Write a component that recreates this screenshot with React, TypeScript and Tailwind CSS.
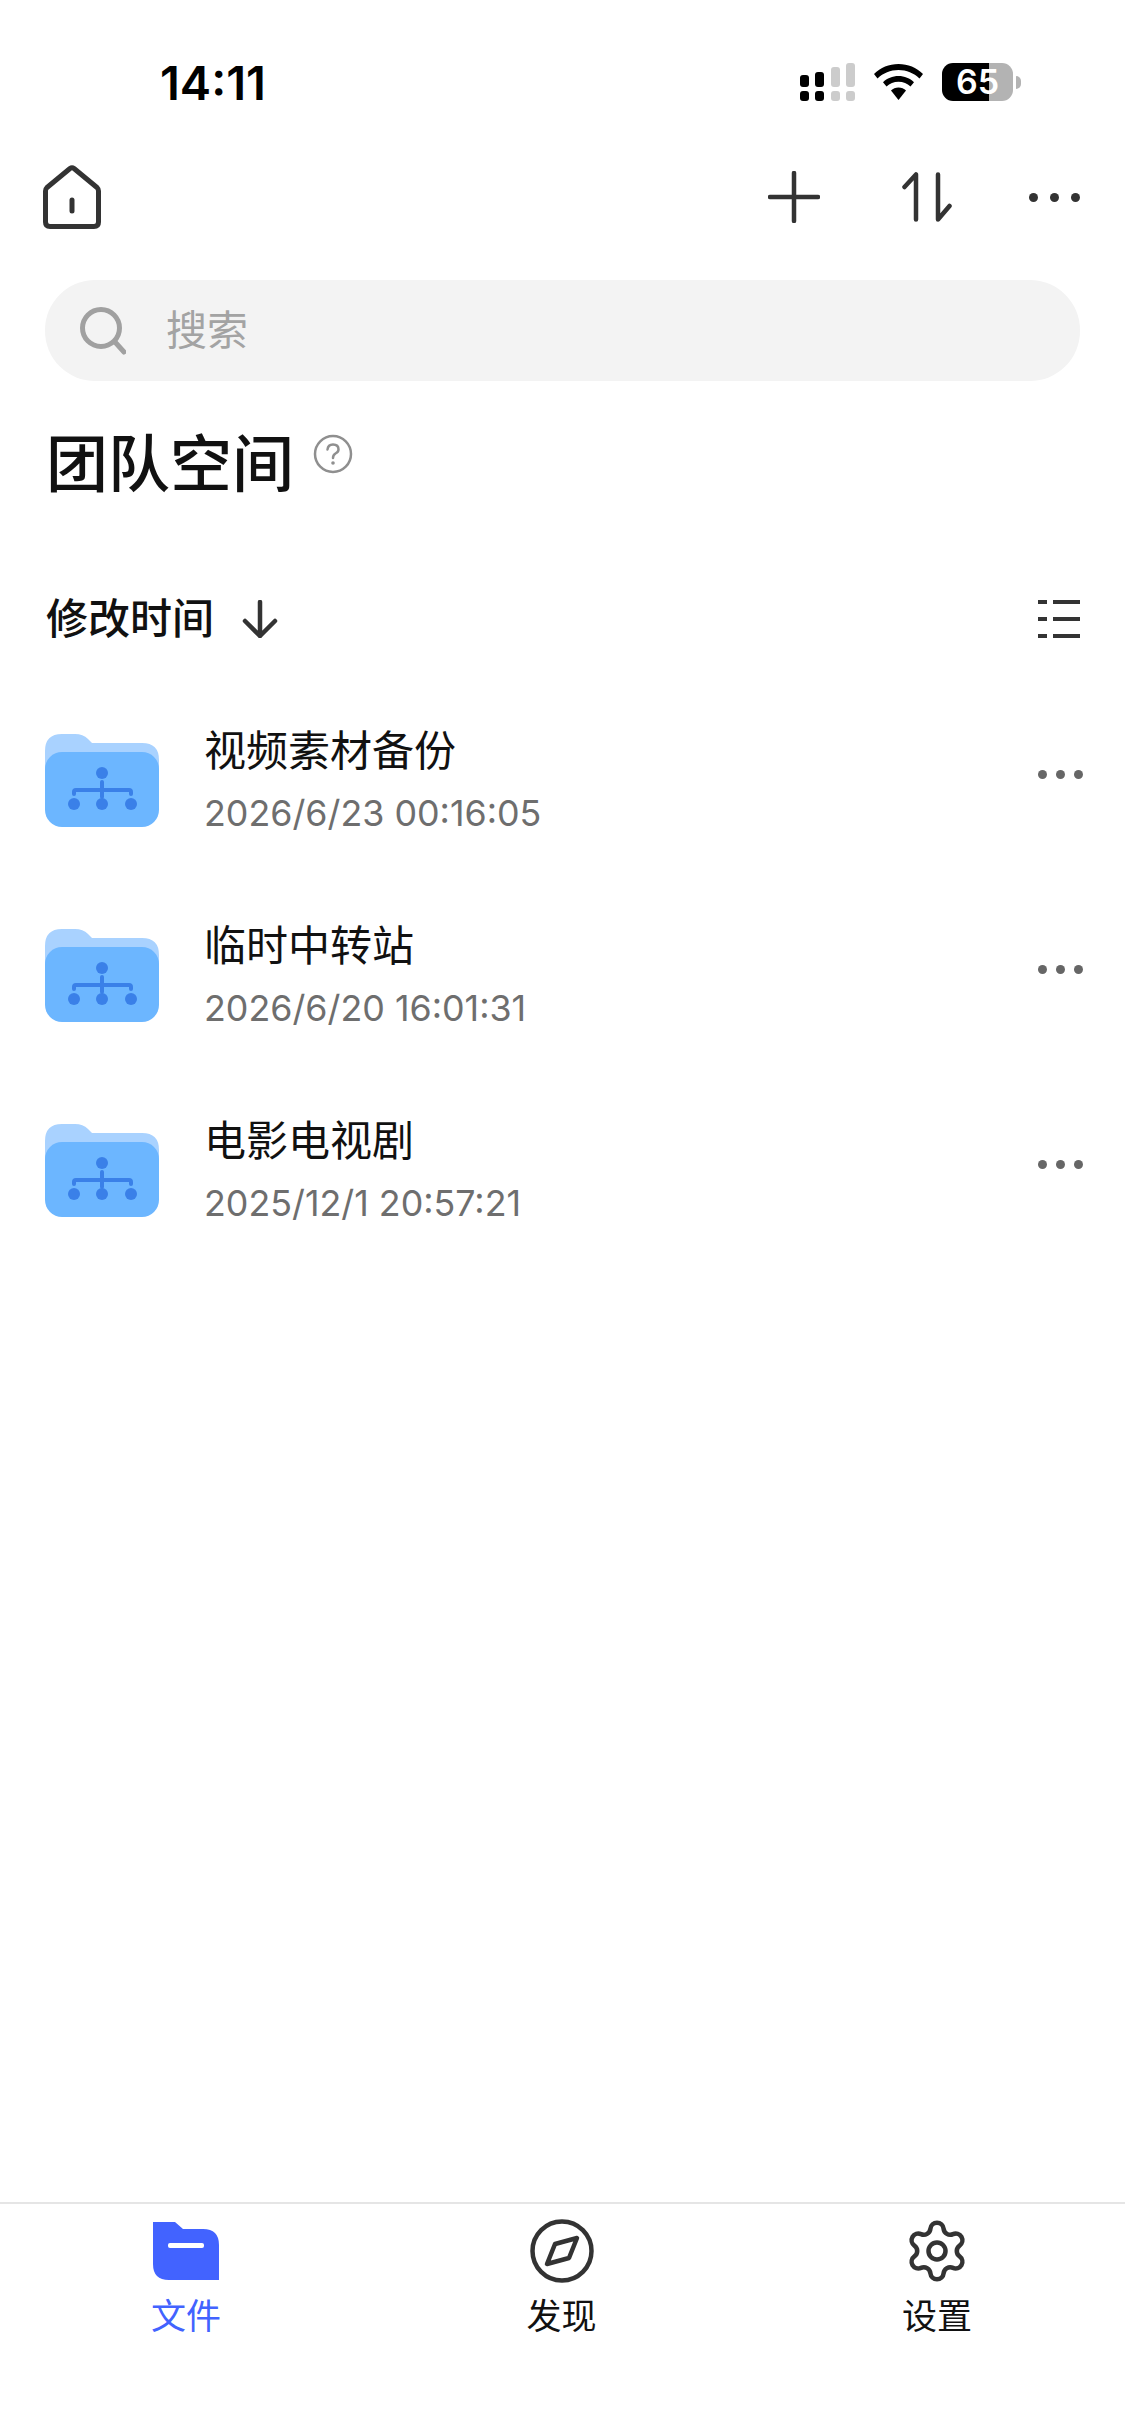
import { Settings } from "lucide-react";

const cjk = "font-['Inter','Noto_Sans_CJK_SC',sans-serif]";

const folders = [
  { name: "视频素材备份", date: "2026/6/23 00:16:05" },
  { name: "临时中转站", date: "2026/6/20 16:01:31" },
  { name: "电影电视剧", date: "2025/12/1 20:57:21" },
];

function TeamFolder() {
  return (
    <svg width="114" height="93" viewBox="0 0 114 93" className="mt-[8px] shrink-0">
      <path d="M0 40V17Q0 0 17 0H30Q38 0 43 5L47 9H97Q114 9 114 26V40Z" fill="#A9D2FF" />
      <rect y="18" width="114" height="75" rx="17" fill="#6CB6FF" />
      <g fill="#3A80E8">
        <circle cx="57" cy="39" r="6" />
        <circle cx="29" cy="70" r="6" />
        <circle cx="57" cy="70" r="6" />
        <circle cx="86" cy="70" r="6" />
      </g>
      <path d="M29 60V58Q29 56 31 56H84Q86 56 86 58V60M57 48V63" fill="none" stroke="#3A80E8" strokeWidth="4" strokeLinecap="round" />
    </svg>
  );
}

function StatusBar() {
  return (
    <div className="flex h-[136px] items-end justify-between pb-[30px] pl-[160px] pr-[104px]">
      <span className="text-[47px] leading-[46px] font-semibold text-black font-['Inter',sans-serif]">14:11</span>
      <div className="mb-[5px] flex items-center gap-[19px]">
        <svg width="55" height="38" viewBox="0 0 55 38">
          <g fill="#000">
            <rect y="12" width="9" height="12" rx="3" />
            <rect y="28" width="9" height="10" rx="3" />
            <rect x="15" y="9" width="9" height="15" rx="3" />
            <rect x="15" y="28" width="9" height="10" rx="3" />
          </g>
          <g fill="#ccc">
            <rect x="31" y="4" width="9" height="20" rx="3" />
            <rect x="31" y="28" width="9" height="10" rx="3" />
            <rect x="46" y="0" width="9" height="24" rx="3" />
            <rect x="46" y="28" width="9" height="10" rx="3" />
          </g>
        </svg>
        <svg width="49" height="36" viewBox="0 0 49 36" fill="#000">
          <path d="M24.500 0C34 0 42.500 3.500 49 10L45.500 14.500C39.800 9 32.500 6 24.500 6C16.500 6 9.200 9 3.500 14.500L0 10C6.500 3.500 15 0 24.500 0Z" />
          <path d="M24.500 12C30.500 12 36 14.300 40 18.200L36.500 22.500C33.300 19.500 29.100 17.800 24.500 17.800C19.900 17.800 15.700 19.500 12.500 22.500L9 18.200C13 14.300 18.500 12 24.500 12Z" />
          <path d="M24.500 23.500C27.500 23.500 30 24.600 32 26.400L24.500 36L17 26.400C19 24.600 21.500 23.500 24.500 23.500Z" />
        </svg>
        <div className="flex items-center gap-[3px]">
          <div className="relative flex h-[38px] w-[71px]">
            <div className="w-[47px] rounded-l-[11px] bg-black" />
            <div className="flex-1 rounded-r-[11px] bg-[#b3b3b3]" />
            <span className="absolute inset-0 flex items-center justify-center text-[34px] leading-none font-semibold text-white font-['Inter',sans-serif]">65</span>
          </div>
          <div className="h-[13px] w-[5px] rounded-r-full bg-[#b3b3b3]" />
        </div>
      </div>
    </div>
  );
}

function Toolbar() {
  return (
    <div className="mt-[27px] flex h-[68px] items-center justify-between pl-[43px] pr-[45px]">
      <svg width="58" height="64" viewBox="0 0 58 64" fill="none" stroke="#333" strokeWidth="5" strokeLinejoin="round" strokeLinecap="round">
        <path d="M2.500 26Q2.500 24 4 22.500L27 3.500Q29 2 31 3.500L54 22.500Q55.500 24 55.500 26V57Q55.500 61.500 51 61.500H7Q2.500 61.500 2.500 57Z" />
        <path d="M29 35V46" />
      </svg>
      <div className="flex items-center">
        <svg width="52" height="52" viewBox="0 0 52 52" stroke="#333" strokeWidth="4.500" strokeLinecap="round">
          <path d="M2 26H50M26 2V50" />
        </svg>
        <svg width="50" height="50" viewBox="0 0 50 50" fill="none" stroke="#333" strokeWidth="4.500" strokeLinecap="round" strokeLinejoin="round" className="ml-[82px]">
          <path d="M2.500 15L14 2.500V47.500M36 2.500V47.500L47.500 34" />
        </svg>
        <svg width="51" height="9" viewBox="0 0 51 9" fill="#333" className="ml-[77px]">
          <circle cx="4.500" cy="4.500" r="4.500" />
          <circle cx="25.500" cy="4.500" r="4.500" />
          <circle cx="46.500" cy="4.500" r="4.500" />
        </svg>
      </div>
    </div>
  );
}

export default function App() {
  return (
    <div className={`flex h-[2436px] w-[1125px] flex-col overflow-hidden bg-white ${cjk}`}>
      <StatusBar />
      <Toolbar />
      <div className="mx-[45px] mt-[49px] flex h-[101px] items-center rounded-[50px] bg-[#f3f3f3] pl-[35px]">
        <svg width="46" height="48" viewBox="0 0 46 48" fill="none" stroke="#a0a0a0" strokeWidth="5" strokeLinecap="round">
          <circle cx="21" cy="21" r="18.500" />
          <path d="M35 35L44 45" />
        </svg>
        <span className="ml-[40px] text-[41px] leading-none text-[#a3a3a3]">搜索</span>
      </div>
      <div className="mt-[45px] flex items-start pl-[46px]">
        <h1 className="text-[62px] leading-[78px] font-medium text-[#111]">团队空间</h1>
        <svg width="40" height="40" viewBox="0 0 40 40" fill="none" className="ml-[19px] mt-[8px]">
          <circle cx="20" cy="20" r="18" stroke="#8f8f8f" strokeWidth="2.500" />
          <path d="M14.500 15.500Q15 10.500 20 10.500Q25.500 10.500 25.500 15.500Q25.500 18 22.500 19.500Q20 21 20 24" stroke="#8f8f8f" strokeWidth="2.500" strokeLinecap="round" />
          <circle cx="20" cy="29" r="1.800" fill="#8f8f8f" />
        </svg>
      </div>
      <div className="mt-[85px] flex h-[60px] items-center justify-between pl-[46px] pr-[45px]">
        <div className="flex items-center gap-[28px]">
          <span className="text-[42px] leading-none font-medium text-[#111]">修改时间</span>
          <svg width="36" height="38" viewBox="0 0 36 38" fill="none" stroke="#333" strokeWidth="4.500" strokeLinecap="round" strokeLinejoin="round">
            <path d="M18 2V36M3 21L18 36L33 21" />
          </svg>
        </div>
        <svg width="42" height="40" viewBox="0 0 42 40" stroke="#333" strokeWidth="4">
          <path d="M0 3H9M15 3H42M0 20H9M15 20H42M0 37H9M15 37H42" />
        </svg>
      </div>
      <div className="mt-[77px] flex flex-col">
        {folders.map((f) => (
          <div key={f.name} className="flex h-[195px] items-start pl-[45px] pr-[42px]">
            <TeamFolder />
            <div className="ml-[45px] flex-1">
              <div className="text-[42px] leading-[50px] text-[#111]">{f.name}</div>
              <div className="mt-[12px] text-[35.800px] leading-[50px] text-[#6e6e6e]">{f.date}</div>
            </div>
            <svg width="45" height="9" viewBox="0 0 45 9" fill="#666" className="mt-[44px]">
              <circle cx="4.500" cy="4.500" r="4.500" />
              <circle cx="22.500" cy="4.500" r="4.500" />
              <circle cx="40.500" cy="4.500" r="4.500" />
            </svg>
          </div>
        ))}
      </div>
      <div className="mt-auto flex h-[234px] justify-between border-t-2 border-[#e5e5e5] pl-[126px] pr-[128px] pt-[15px]">
        <div className="flex w-[120px] flex-col items-center">
          <svg width="66" height="58" viewBox="0 0 66 58" className="mt-[3px]">
            <path d="M0 0H22L30 7H50Q66 7 66 23V58H16Q0 58 0 42Z" fill="#4263FF" />
            <rect x="15" y="21" width="36" height="5" rx="2" fill="#fff" />
          </svg>
          <span className="mt-[14px] text-[35px] leading-[44px] text-[#4263FF]">文件</span>
        </div>
        <div className="flex w-[120px] flex-col items-center">
          <svg width="64" height="64" viewBox="0 0 64 64" fill="none" stroke="#333" strokeWidth="4.500" strokeLinejoin="round">
            <circle cx="32" cy="32" r="29.500" />
            <path d="M47 19L25 25L17 45L39 39Z" />
          </svg>
          <span className="mt-[11px] text-[35px] leading-[44px] text-[#111]">发现</span>
        </div>
        <div className="flex w-[120px] flex-col items-center">
          <Settings size={68} color="#333" strokeWidth={1.600} className="-my-[2px]" />
          <span className="mt-[11px] text-[35px] leading-[44px] text-[#111]">设置</span>
        </div>
      </div>
    </div>
  );
}
